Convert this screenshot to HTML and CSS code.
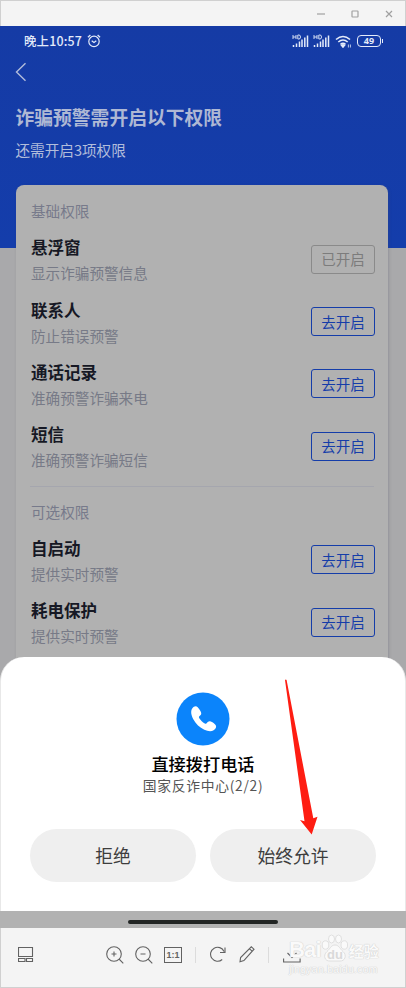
FILE: index.html
```html
<!DOCTYPE html>
<html lang="zh-CN">
<head>
  <meta charset="UTF-8">
  <meta name="viewport" content="width=device-width, initial-scale=1.0">
  <title>诈骗预警权限</title>
  <link rel="stylesheet" href="styles.css">
</head>
<body>
  <div class="window">
    <div class="titlebar">
      <svg width="10" height="10" viewBox="0 0 10 10"><path d="M1 5h8"/></svg>
      <svg width="10" height="10" viewBox="0 0 10 10"><rect x="2" y="2" width="6" height="6" rx=".5"/></svg>
      <svg width="10" height="10" viewBox="0 0 10 10"><path d="M2 2l6 6M8 2l-6 6"/></svg>
    </div>

    <div class="phone">
      <div class="page">
        <div class="statusbar">
          <span class="clock">晚上10:57</span>
          <svg class="alarm" width="14" height="14" viewBox="0 0 14 14"><circle cx="7" cy="7.4" r="5.2"/><path d="M4.700 6.700l2.300 1.800 2.300-1.800M.9 3.300L3.400 1M13.100 3.300L10.600 1"/></svg>
          <div class="status-icons">
            <svg width="17" height="14" viewBox="0 0 17 14"><path class="hd" d="M1 1v4M4 1v4M1 3h3M5.800 1v4h1.200q1.500 0 1.500-2t-1.500-2z"/><path class="bars" d="M1.500 11v2M4.500 9.500v3.500M7.500 7.500v5.500M10 5.500v7.500M12.800 3.500v9.500M15.500 1.500v11.500"/></svg>
            <svg width="17" height="14" viewBox="0 0 17 14"><path class="hd" d="M1 1v4M4 1v4M1 3h3M5.800 1v4h1.200q1.500 0 1.500-2t-1.500-2z"/><path class="bars" d="M1.500 11v2M4.500 9.500v3.500M7.500 7.500v5.500M10 5.500v7.500M12.800 3.500v9.500M15.500 1.500v11.500"/></svg>
            <svg class="wifi" width="17" height="13" viewBox="0 0 17 13"><path d="M1 4.500q7-6 14 0M3.300 7q4.700-4 9.400 0M5.500 9.300q2.500-2 5 0"/><path class="fill" d="M6.500 10.200q1.500-1 3 0L8 12z"/><path class="data" d="M13.400 9.500v3M15.400 9.500v3"/></svg>
            <div class="battery">49</div>
          </div>
        </div>

        <svg class="back" width="12" height="20" viewBox="0 0 12 20"><path d="M10.500 1.300L1.500 10l9 8.700"/></svg>
        <h1 class="heading">诈骗预警需开启以下权限</h1>
        <p class="remaining">还需开启3项权限</p>

        <div class="card">
          <h2 class="section-label">基础权限</h2>
          <div class="row">
            <div class="info"><h3>悬浮窗</h3><p>显示诈骗预警信息</p></div>
            <button class="btn done">已开启</button>
          </div>
          <div class="row">
            <div class="info"><h3>联系人</h3><p>防止错误预警</p></div>
            <button class="btn">去开启</button>
          </div>
          <div class="row">
            <div class="info"><h3>通话记录</h3><p>准确预警诈骗来电</p></div>
            <button class="btn">去开启</button>
          </div>
          <div class="row">
            <div class="info"><h3>短信</h3><p>准确预警诈骗短信</p></div>
            <button class="btn">去开启</button>
          </div>
          <div class="divider"></div>
          <h2 class="section-label">可选权限</h2>
          <div class="row">
            <div class="info"><h3>自启动</h3><p>提供实时预警</p></div>
            <button class="btn">去开启</button>
          </div>
          <div class="row">
            <div class="info"><h3>耗电保护</h3><p>提供实时预警</p></div>
            <button class="btn">去开启</button>
          </div>
        </div>
      </div>

      <!-- permission dialog -->
      <div class="sheet">
        <svg class="call-icon" width="54" height="54" viewBox="0 0 54 54"><circle cx="27" cy="27" r="26.500" fill="#0b84fb"/><path fill="#fff" d="M16.200 16.500c1.700-2.400 4-2.800 5.500-1.200 1.400 1.500 2.700 3.500 3.300 5 .7 1.800-.1 2.700-1.400 3.700-.8.700-.8 1.400-.3 2.200 1.500 2.300 3.200 4 5.500 5.300.9.500 1.500.4 2.100-.4 1-1.400 2-2.300 3.800-1.600 1.700.7 3.500 1.900 4.700 3.200 1.500 1.700.7 3.800-1.800 5.500-2.300 1.500-5.800 1.100-9.300-.5-4.600-2.100-8.500-6-11-10.500-2.100-3.900-2.900-8-1.100-10.700z"/></svg>
        <h2 class="sheet-title">直接拨打电话</h2>
        <p class="sheet-sub">国家反诈中心(2/2)</p>
        <div class="actions">
          <button class="action">拒绝</button>
          <button class="action">始终允许</button>
        </div>
        <svg class="arrow" width="36" height="156" viewBox="0 0 36 156"><path fill="#fe1d12" d="M0 1Q.8 0 1.600 1L28.300 139.300l4.200-1.500L26.700 155.500 15 141l4.500 1.300z"/></svg>
      </div>
      <div class="homebar"><span></span></div>
    </div>

    <div class="toolbar">
      <svg class="layout" width="16" height="16" viewBox="0 0 16 16"><path d="M.5.500h14v9H.5zM.5 11.500h6.500v3H.5zM8.500 11.500h6v3h-6z"/></svg>
      <svg class="zoom-in" width="18" height="18" viewBox="0 0 18 18"><circle cx="8" cy="8" r="7.300"/><path d="M5.500 8h5M8 5.500v5M13 13l4.300 4.300"/></svg>
      <svg class="zoom-out" width="18" height="18" viewBox="0 0 18 18"><circle cx="8" cy="8" r="7.300"/><path d="M5.500 8h5M13 13l4.300 4.300"/></svg>
      <span class="actual">1:1</span>
      <i class="sep"></i>
      <svg class="rotate" width="16" height="17" viewBox="0 0 16 17"><path d="M12.200 13.500A7 7 0 1 1 14 5.500M15 1.500v5h-5"/></svg>
      <svg class="pencil" width="16" height="17" viewBox="0 0 16 17"><path d="M1 15.800l.6-4.300L12.300.800 15 3.200 4.900 14.500zM10.500 2.900L13.200 5.200"/></svg>
      <i class="sep second"></i>
      <svg class="download" width="18" height="17" viewBox="0 0 18 17"><path d="M9 0v11.500M4.500 7l4.500 4.500L13.500 7M.6 12.500v3.500h16.500v-3.500"/></svg>
      <div class="watermark">
        <div class="brand">
          <span>Bai</span>
          <svg width="28" height="28" viewBox="0 0 28 28"><ellipse cx="4.500" cy="11" rx="3.300" ry="4.200"/><ellipse cx="10.500" cy="5" rx="3" ry="4"/><ellipse cx="17.500" cy="5" rx="3" ry="4"/><ellipse cx="23.300" cy="11" rx="3.300" ry="4.200"/><path d="M14 11c4 0 5 4 8 6.500 4.500 4 1.500 10-3 9.500H9c-5 .5-7.500-5.500-3-9.500 3-2.500 4-6.500 8-6.500z"/><text x="14" y="24.500" text-anchor="middle">du</text></svg>
          <span class="cn">经验</span>
        </div>
        <div class="site">jingyan.baidu.com</div>
      </div>
    </div>
  </div>
</body>
</html>
```

FILE: styles.css
```css
* {
  box-sizing: border-box;
}
body {
  margin: 0;
  font-family: "Noto Sans CJK SC", sans-serif;
}
h1, h2, h3, p {
  margin: 0;
  font-weight: 400;
}
button {
  font-family: inherit;
  padding: 0;
}
svg {
  display: block;
  flex: none;
  fill: none;
}
.window {
  width: 406px;
  height: 988px;
  overflow: hidden;
  display: flex;
  flex-direction: column;
  background: #f4f4f4;
}
.titlebar {
  height: 26px;
  border: 1px solid #d0d0d0;
  border-bottom: 0;
  display: flex;
  align-items: center;
  justify-content: flex-end;
  gap: 24px;
  padding-right: 11px;
}
.titlebar svg {
  stroke: #a0a0a0;
  stroke-width: 1.2;
}
.phone {
  position: relative;
  height: 902px;
  display: flex;
  flex-direction: column;
  justify-content: space-between;
  overflow: hidden;
  background: #b2b2b2;
}
.page {
  height: 885px;
  background: linear-gradient(#153ba5 0, #143dab 222px, #a9a9ab 222px);
}

/* status bar */
.statusbar {
  height: 30px;
  display: flex;
  align-items: center;
  padding: 0 25px 0 24px;
  color: #e4ebfa;
}
.statusbar svg {
  stroke: #e4ebfa;
  stroke-width: 1.2;
}
.clock {
  font-size: 12.4px;
  font-weight: 500;
  letter-spacing: 0.2px;
  line-height: 30px;
}
.alarm {
  margin-left: 5px;
}
.status-icons {
  display: flex;
  align-items: center;
  margin-left: auto;
  gap: 4px;
}
.status-icons .hd {
  stroke-width: 0.9;
}
.status-icons .bars {
  stroke-width: 1.5;
}
.wifi {
  margin: 0 1px;
}
.statusbar .wifi path {
  stroke-width: 1.6;
}
.statusbar .wifi .data {
  stroke-width: 0.8;
}
.wifi .fill {
  fill: #e4ebfa;
}
.battery {
  width: 24px;
  height: 12px;
  border: 1.5px solid #e4ebfa;
  border-radius: 4px;
  font: bold 9px/10px "Open Sans", sans-serif;
  text-align: center;
  position: relative;
}
.battery::after {
  content: "";
  position: absolute;
  right: -3px;
  top: 3px;
  width: 1px;
  height: 4px;
  background: #e4ebfa;
}

/* page header */
.back {
  margin: 6px 0 0 15px;
  stroke: #b2bddb;
  stroke-width: 1.4;
}
.heading {
  margin: 20px 0 0 15.5px;
  font-size: 18.8px;
  font-weight: 700;
  line-height: 30px;
  color: #aeb8d4;
}
.remaining {
  margin: 6px 0 0 15.5px;
  font-size: 14.6px;
  line-height: 24px;
  color: #b2bddb;
}

/* permission list */
.card {
  width: 372px;
  height: 560px;
  margin: 23px 0 0 15.5px;
  padding: 16px 12.5px 0 15.5px;
  border-radius: 8px;
  background: #b1b1b1;
  box-shadow: 1px 1px 3px rgba(80, 80, 100, 0.25);
}
.section-label {
  font-size: 14.6px;
  line-height: 20px;
  margin-bottom: 9px;
  color: #777a8b;
}
.row {
  height: 62.4px;
  display: flex;
  align-items: center;
  justify-content: space-between;
}
.info {
  margin-bottom: 2px;
}
.info h3 {
  font-size: 16.5px;
  font-weight: 700;
  line-height: 26px;
  color: #161824;
}
.info p {
  font-size: 14.6px;
  line-height: 26px;
  color: #777a87;
}
.btn {
  width: 64px;
  height: 29px;
  margin-bottom: 4px;
  border: 1px solid #153da9;
  border-radius: 3px;
  background: none;
  font-size: 14.5px;
  line-height: 26px;
  color: #153da9;
}
.btn.done {
  border-color: #8a8a8a;
  color: #7c7c7c;
}
.divider {
  height: 1px;
  margin: 6px 1px 15px -1px;
  background: #a5a6ae;
}

/* bottom sheet over the page */
.sheet {
  position: absolute;
  left: 0;
  right: 0;
  top: 631px;
  height: 254px;
  padding: 35px 30px 0;
  border: 1px solid #e8e8e8;
  border-width: 0 1px;
  border-radius: 24px 24px 0 0;
  background: #fff;
  display: flex;
  flex-direction: column;
  align-items: center;
}
.sheet-title {
  margin-top: 6px;
  font-size: 17.2px;
  font-weight: 500;
  line-height: 24px;
  color: #000;
}
.sheet-sub {
  font-size: 13.8px;
  letter-spacing: 0.7px;
  line-height: 18px;
  color: #555;
}
.actions {
  display: flex;
  gap: 14px;
  margin-top: 35px;
}
.action {
  width: 166px;
  height: 53px;
  padding-bottom: 2px;
  border: 0;
  border-radius: 27px;
  background: #efefef;
  font-size: 17.8px;
  color: #3d3d3d;
}
.arrow {
  position: absolute;
  left: 284px;
  top: 22px;
}
.homebar {
  flex: none;
  height: 17px;
  display: flex;
  justify-content: center;
  padding-top: 9px;
}
.homebar span {
  width: 150px;
  height: 4px;
  border-radius: 2px;
  background: #222524;
}

/* viewer toolbar */
.toolbar {
  height: 60px;
  display: flex;
  align-items: center;
  padding: 0 0 6px 17px;
  border: 1px solid #d0d0d0;
  border-top: 0;
  position: relative;
}
.toolbar > svg {
  stroke: #626262;
  stroke-width: 1.1;
}
.zoom-in {
  margin-left: 72px;
}
.zoom-out {
  margin-left: 11px;
}
.actual {
  width: 18px;
  height: 16px;
  margin-left: 11px;
  border: 1px solid #626262;
  font: bold 9px/14px "Liberation Sans", sans-serif;
  text-align: center;
  color: #626262;
}
.sep {
  width: 1px;
  height: 16px;
  margin-left: 13px;
  background: #dcdcdc;
}
.rotate {
  margin-left: 14px;
}
.pencil {
  margin-left: 13px;
}
.sep.second {
  margin-left: 13px;
}
.download {
  margin-left: 14px;
}

/* watermark overlaps the download icon */
.watermark {
  position: absolute;
  left: 288px;
  top: 5px;
  color: #fafafa;
  text-shadow: 0 0 1px #ccc, 0 0 1px #ccc;
}
.brand {
  display: flex;
  align-items: flex-end;
  height: 29px;
  font: bold 22px/24px "Liberation Sans", sans-serif;
}
.brand > span {
  letter-spacing: -0.8px;
}
.brand svg {
  fill: #fafafa;
  stroke: #d9d9d9;
  stroke-width: 0.8;
}
.brand text {
  font: bold 13px "Liberation Sans", sans-serif;
  fill: #d9d9d9;
  stroke: none;
  text-shadow: none;
}
.brand .cn {
  font: bold 15px/22px "Noto Sans CJK SC", sans-serif;
  letter-spacing: 0;
}
.site {
  font: 11px/14px "Liberation Sans", sans-serif;
}
```
